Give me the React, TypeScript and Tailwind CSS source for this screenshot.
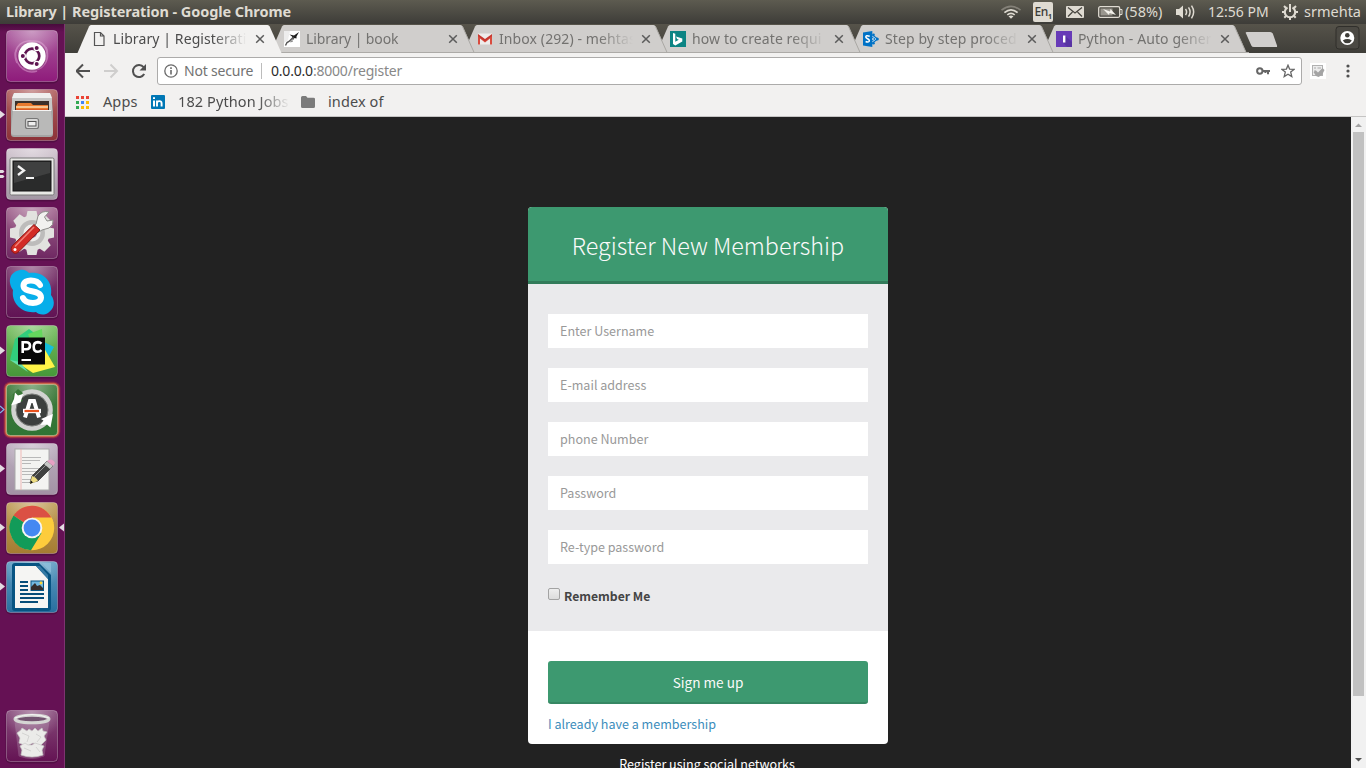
import React from "react";
import type { ReactNode } from "react";

const UI = "font-['Noto_Sans','Open_Sans',sans-serif]";
const SOURCE = "font-['Noto_Sans_CJK_SC',sans-serif]";

/* ---------- Launcher ---------- */

type Pip = "none" | "one" | "two" | "open" | "focused";

function Tile({ id, from, to, pip = "none", glow, children }: { id: string; from: string; to: string; pip?: Pip; glow?: boolean; children: ReactNode }) {
  return (
    <svg width="64" height="59" viewBox="0 0 64 59" className="block shrink-0 overflow-visible">
      <defs>
        <linearGradient id={"t" + id} x1="0" y1="0" x2="0" y2="1">
          <stop offset="0" stopColor={from} />
          <stop offset="1" stopColor={to} />
        </linearGradient>
        <radialGradient id={"g" + id} cx="0.5" cy="0" r="0.6">
          <stop offset="0" stopColor="#fff" stopOpacity="0.4" />
          <stop offset="1" stopColor="#fff" stopOpacity="0" />
        </radialGradient>
      </defs>
      {glow && (
        <>
          <rect x="3.5" y="-2.5" width="57" height="57" rx="7" fill="#e5532d" opacity="0.25" />
          <rect x="4.5" y="-1.5" width="55" height="55" rx="6" fill="#ee6a3a" opacity="0.5" />
          <rect x="5.5" y="-0.5" width="53" height="53" rx="5" fill="#e99a5e" opacity="0.85" />
        </>
      )}
      {!glow && <rect x="5.5" y="1" width="53" height="52.5" rx="5" fill="#000" opacity="0.18" />}
      <rect x="6.5" y="0.5" width="51" height="51" rx="4" fill={`url(#t${id})`} stroke="#fff" strokeOpacity="0.28" />
      <rect x="6.5" y="0.5" width="51" height="51" rx="4" fill={`url(#g${id})`} />
      <g transform="translate(6 0)">{children}</g>
      {(pip === "one" || pip === "focused") && <path d="M0 21.5 L5 25.5 L0 29.5Z" fill="#e3dce2" />}
      {pip === "focused" && <path d="M64 21.5 L59 25.5 L64 29.5Z" fill="#e3dce2" />}
      {pip === "two" && <path d="M0 22h3l1.5 1.5L3 25H0Z M0 27h3l1.5 1.5L3 30H0Z" fill="#e3dce2" />}
      {pip === "open" && <path d="M0 22 L4 25.5 L0 29" fill="none" stroke="#7fb6e8" strokeWidth="1.2" />}
    </svg>
  );
}

function Launcher() {
  return (
    <aside className="flex w-[65px] shrink-0 flex-col border-r border-[#7e3470] bg-[#651154] bg-[linear-gradient(180deg,#480b3c_0,#651154_8px)] pt-[6px]">
      <Tile id="dash" from="#ab5c9e" to="#8f1b7b">
        <g fill="none" stroke="#e9b5df" strokeWidth="1.6" opacity="0.45">
          <path d="M11 33C4 17 19 6 31 13" /><path d="M21 13C38 5 46 24 38 32" /><path d="M40 17C47 36 28 46 17 37" /><path d="M31 41C18 46 5 30 11 18" />
        </g>
        <circle cx="26" cy="26.5" r="14.5" fill="#4d0e40" opacity="0.25" />
        <circle cx="26" cy="26" r="13.7" fill="#fff" />
        <circle cx="26" cy="26" r="7.3" fill="none" stroke="#5e1450" strokeWidth="2.7" />
        <g stroke="#fff" strokeWidth="1.2" fill="#5e1450">
          <circle cx="16.8" cy="26" r="2.6" /><circle cx="30.7" cy="18" r="2.6" /><circle cx="30.7" cy="34" r="2.6" />
        </g>
      </Tile>
      <Tile id="files" from="#b0605f" to="#8c3238" pip="one">
        <path d="M7 5H45L47 22V45Q47 48 44 48H8Q5 48 5 45V22Z" fill="#a5a5a4" />
        <path d="M8 4H44L46 9H6Z" fill="#efefee" />
        <path d="M6 9H46V22H6Z" fill="#c7c7c6" />
        <rect x="9" y="12" width="34" height="10" fill="#3b302b" />
        <path d="M10 17L12 14H25L27 16H42V22H10Z" fill="#e97a2e" /><path d="M10 18H42" stroke="#ffe5ba" strokeWidth="1.4" />
        <path d="M10 20.5H42" stroke="#d95b29" strokeWidth="1" />
        <path d="M7 21H45L47 43Q47 46 44 46H8Q5 46 5 43Z" fill="#b9b9b8" />
        <path d="M7 21.5H45" stroke="#f4f4f3" />
        <rect x="19.5" y="29.5" width="13" height="10" rx="2" fill="#d7d7d6" stroke="#777" strokeWidth="1.2" />
        <rect x="22" y="32.5" width="8" height="4.5" fill="#eee" stroke="#555" />
      </Tile>
      <Tile id="term" from="#d0c3ce" to="#a398a4" pip="two">
        <rect x="4" y="10" width="44" height="37" rx="1.5" fill="#e9e9e6" stroke="#777" />
        <rect x="7" y="13" width="38" height="30" fill="#2a2b2b" stroke="#151515" />
        <path d="M8 14H44V25L8 35Z" fill="#4b4c4b" opacity="0.65" />
        <path d="M12 18L18 22.5L12 27" fill="none" stroke="#f4f4f4" strokeWidth="2.3" />
        <path d="M20 30H28" stroke="#f4f4f4" strokeWidth="2" />
      </Tile>
      <Tile id="set" from="#a2668f" to="#6f2862">
        <g fill="#e2e2df">
          {[0, 45, 90, 135, 180, 225, 270, 315].map((a) => (
            <path key={a} d="M20 11L21.5 4H30.5L32 11Z" transform={`rotate(${a} 26 26)`} />
          ))}
          <circle cx="26" cy="26" r="17.5" />
        </g>
        <circle cx="26" cy="26" r="13" fill="#bdbcbb" /><circle cx="26" cy="26" r="8.5" fill="#eeeeec" /><circle cx="26" cy="26" r="5" fill="#94608b" />
        <path d="M30 17L32 9Q36 3 43 5L38.5 10L41 14L47 13Q48 18 43 21L36 23L31 26L26 21Z" fill="#f1f1ef" stroke="#8d8d8a" strokeWidth="1" />
        <path d="M28 17.5L34 23L13 44.5Q9.5 48 6.5 45Q3.5 42 7 38Z" fill="#d32b25" stroke="#8d1917" />
        <path d="M28 20L9 39.5" stroke="#f18176" strokeWidth="1.6" /><circle cx="9" cy="42.5" r="1.5" fill="#fff" />
      </Tile>
      <Tile id="skype" from="#7c3b6f" to="#611354">
        <path d="M14 4C18 3 21 5 23 7C38 5 47 16 45 29C50 36 48 43 42 47C37 50 32 48 30 46C16 48 5 37 7 24C1 15 4 6 14 4Z" fill="#07aeea" />
        <path d="M34 19C31 13 18 12.5 17.5 19.5C17 27.5 35 23 35 31.5C34.5 39 20 38.5 17 32" fill="none" stroke="#fff" strokeWidth="6" strokeLinecap="round" />
      </Tile>
      <Tile id="pc" from="#76bd5f" to="#469739" pip="one">
        <path d="M9 14L23 4L35 13L22 44L4 35Z" fill="#31ce7d" /><path d="M22 9L36 4L37 18L26 20Z" fill="#65d75d" />
        <path d="M36 16L48 22L42 33L36 36Z" fill="#15bed9" /><path d="M38 23L49 42L27 48L12 38Z" fill="#fff447" /><path d="M4 35L14 37L22 47Z" fill="#65e0a9" />
        <rect x="12" y="12.5" width="27" height="27" fill="#090909" />
        <g fill="none" stroke="#fff" strokeWidth="2.6">
          <path d="M16.7 28V17.2H20.2Q24 17.2 24 20.7T20.2 24.2H17" /><path d="M35.5 18.6Q33.9 17.1 31.9 17.1Q27.7 17.2 27.7 22T31.9 26.8Q33.9 26.8 35.5 25.2" />
        </g>
        <path d="M15.5 35H25" stroke="#fff" strokeWidth="2" />
      </Tile>
      <Tile id="upd" from="#3f7a3b" to="#2f7434" glow pip="open">
        <circle cx="26" cy="26" r="18.5" fill="#3c403e" stroke="#d2d3d1" strokeWidth="4.6" />
        <circle cx="26" cy="26" r="16" fill="none" stroke="#8d8f8c" strokeWidth="0.8" />
        <path d="M3 14L7 10.5L5.5 20.5L17 17L13.5 13.5L17 9L12 5L8 9Z" fill="#3a7838" />
        <path d="M9 8.5L12 11.5L17 10L14.5 18.5L5 21.5L8 15Z" fill="#fff" />
        <path d="M47 30L44.5 43.5L41 40.5L34.5 41L37.5 36.5L35 35Z" fill="#fff" />
        <path d="M19 33.5L24 17H28L33 33.5" fill="none" stroke="#fff" strokeWidth="4" />
        <path d="M17 27H35" stroke="#fff" strokeWidth="4.4" /><path d="M18.5 27H33" stroke="#e95420" strokeWidth="2.2" />
      </Tile>
      <Tile id="edit" from="#bdafc0" to="#a292a4" pip="one">
        <rect x="9" y="6" width="34" height="41" fill="#f3f3f1" stroke="#aaa" />
        <path d="M15 6V47" stroke="#eaa" strokeWidth="0.8" />
        <g stroke="#b8b8b8" strokeWidth="1">
          <path d="M16 14.5H35M16 17.5H34M16 20.5H25M16 25.5H36M16 28.5H37M16 31.5H33M16 36.5H32M16 39.5H28" />
        </g>
        <path d="M24 40L26 33L41 18L47 23L32 38Z" fill="#404140" stroke="#191919" strokeWidth="0.6" />
        <path d="M24 41L26 33Q30 34 32 38Z" fill="#eddc81" /><path d="M24 41L25 37.5L27 39.5Z" fill="#111" />
        <path d="M38 21L41 18L47 23L44 26Z" fill="#c6c7c5" /><path d="M41 18Q46 14 49 20L47 23Z" fill="#e7a1c5" />
        <path d="M28 34L40 22" stroke="#929292" strokeWidth="1" />
      </Tile>
      <Tile id="chrome" from="#c09d59" to="#a57c32" pip="focused">
        <circle cx="26" cy="26" r="22.2" fill="#fdcc3c" />
        <path d="M26 26L7.5 13.5A22.2 22.2 0 0 1 45.4 15.5Z" fill="#db5044" /><path d="M26 15.5H45.2Q47 18 47.7 21L26 26Z" fill="#fdcc3c" />
        <path d="M26 26L7.5 13.5A22.2 22.2 0 0 0 25 48.2L35.5 31Z" fill="#129b59" />
        <circle cx="26" cy="26" r="10.3" fill="#f6f5f3" /><circle cx="26" cy="26" r="8.4" fill="#4488f2" />
      </Tile>
      <Tile id="writer" from="#5e9cc2" to="#286f9f" pip="one">
        <path d="M9 2H33L45 14V47Q45 50 42 50H9Q6 50 6 47V5Q6 2 9 2Z" fill="#075482" /><path d="M9 5H30L42 18V47H9Z" fill="#f5f5f3" />
        <path d="M30 5L42 18V14L34 5Z" fill="#377ba5" /><path d="M36 2H45V12Z" fill="#8fc1dc" opacity="0.75" />
        <path d="M14 21H22M14 25H22M14 29H22M14 33H38M14 37H38M14 41H32" stroke="#064d79" strokeWidth="2" />
        <rect x="25" y="20" width="12.5" height="9.5" fill="#73b9df" stroke="#075482" /><path d="M25 29V26L29 22L31 25L34 24L37 27V29Z" fill="#342e2c" /><circle cx="35" cy="22" r="1.4" fill="#ffd736" />
      </Tile>
      <div className="mt-auto flex h-[58px] shrink-0">
        <Tile id="trash" from="#874b7b" to="#641353">
          <path d="M9 11L13 46Q26 51 38 46L43 11Z" fill="#c9bdc8" opacity="0.25" stroke="#d9cad7" strokeWidth="0.8" />
          <g fill="#ebebe9" stroke="#c9c9c7" strokeWidth="0.7">
            <path d="M11 23L15 20L16 18L21 21L23 19L26 21L29 18L32 21L36 18L37 21L41 22L38 26L40 30L37 33L34 36L27 33L21 36L13 33L14 28Z" />
            <path d="M14 36L19 33L22 35L26 35L29 33L32 34L38 36L36 40L37 45Q26 49 15 45L16 40Z" />
            <path d="M16 23L23 26L21 32M30 24L35 27L31 32M18 38L25 41M30 37L34 42" fill="none" />
          </g>
          <ellipse cx="26" cy="9" rx="17" ry="3.8" fill="#735470" stroke="#d5d5d3" strokeWidth="3" />
          <path d="M9 8Q26 1 43 8" fill="none" stroke="#f5f5f4" />
        </Tile>
      </div>
    </aside>
  );
}

/* ---------- Desktop menu bar ---------- */

function TopPanel() {
  return (
    <header className={`${UI} flex h-6 items-center bg-[linear-gradient(180deg,#5d5b50,#3d3c38)] text-[#dfdbd2]`}>
      <h1 className="mb-[2px] ml-[6px] w-[994px] shrink-0 whitespace-nowrap text-[14.5px] leading-6 font-bold tracking-[-0.08px]">Library | Registeration - Google Chrome</h1>
      <svg width="22" height="24" viewBox="0 0 22 24" className="shrink-0" fill="none" stroke="#dfdbd2" strokeWidth="1.7">
        <path d="M1.5 10.2Q11 2.5 20.5 10.2" opacity="0.35" /><path d="M4.4 12.6Q11 7 17.6 12.6" /><path d="M7.3 14.9Q11 11.8 14.7 14.9" /><path d="M8.5 16.3Q11 14.5 13.5 16.3L11 18.8Z" fill="#dfdbd2" stroke="none" />
      </svg>
      <div className="ml-[11px] flex h-5 w-5 shrink-0 items-center justify-center rounded-[2px] bg-[#dfdbd2] text-[12px] leading-5 font-medium tracking-[-0.4px] text-[#3d3c38]">
        En<span className="mt-[9px] text-[7px] leading-3 font-bold">1</span>
      </div>
      <svg width="18" height="12" viewBox="0 0 18 12" className="ml-[13px] shrink-0"><rect width="18" height="12" rx="1" fill="#dfdbd2" /><path d="M2 1.5L9 7L16 1.5M2 10.5L6.5 6M16 10.5L11.5 6" fill="none" stroke="#46443e" strokeWidth="1.2" /></svg>
      <svg width="25" height="12" viewBox="0 0 25 12" className="ml-[14px] shrink-0"><rect x="0.7" y="0.7" width="21" height="10.6" rx="1.5" fill="none" stroke="#dfdbd2" strokeWidth="1.3" /><rect x="2.5" y="2.5" width="12" height="7" fill="#99968e" /><path d="M22 3.5H24V8.5H22" fill="none" stroke="#dfdbd2" /><path d="M5 3L12 5.5L12.5 3L18 9L11.5 7L11 9Z" fill="#f2f0ea" /></svg>
      <span className="mb-[2px] ml-[2px] w-[40px] shrink-0 whitespace-nowrap text-[14.5px] leading-6">(58%)</span>
      <svg width="22" height="18" viewBox="0 0 22 18" className="ml-[10px] shrink-0" fill="none" stroke="#dfdbd2" strokeWidth="1.5"><path d="M1 6H4L8 2.5V15.5L4 12H1Z" fill="#dfdbd2" stroke="none" /><path d="M10.5 6Q12.7 9 10.5 12M13.5 4.3Q16.7 9 13.5 13.7M16.5 2.7Q20.8 9 16.5 15.3" /></svg>
      <span className="ml-[11px] w-[62px] shrink-0 whitespace-nowrap text-[14px] leading-6">12:56 PM</span>
      <svg width="18" height="18" viewBox="0 0 18 18" className="ml-[11px] shrink-0" fill="none" stroke="#dfdbd2"><path d="M6.5 4.5A5.2 5.2 0 1 0 11.5 4.5" strokeWidth="2.1" /><path d="M9 1V9" strokeWidth="2" /><path d="M3 3L5 5M15 3L13 5M1 9H3.5M14.5 9H17M3.3 14.7L5.2 12.8M14.7 14.7L12.8 12.8M9 14.5V17" strokeWidth="2" /></svg>
      <span className="mb-[2px] ml-[5px] whitespace-nowrap text-[14.5px] leading-6">srmehta</span>
    </header>
  );
}

/* ---------- Browser chrome ---------- */

function Favicon({ kind }: { kind: string }) {
  if (kind === "page") return <svg width="16" height="16" viewBox="0 0 16 16"><path d="M3.5 1.5H9.5L13 5V14.5H3.5Z M9.5 1.5V5H13" fill="none" stroke="#555" strokeWidth="1.2" /></svg>;
  if (kind === "plane")
    return (
      <svg width="16" height="16" viewBox="0 0 16 16"><rect width="16" height="16" fill="#fff" /><path d="M0 0H6L4 9L0 12Z" fill="#ededed" /><path d="M15 1L12.5 5.5L12.5 7.5L10.5 7L9 9L8 5.5L5.5 3.5L10 4.5Z" fill="#1d1d1d" /><path d="M9.5 6L5 10.5L3 11.5L1.5 14.5" stroke="#555" strokeWidth="1.4" fill="none" /><path d="M9.5 7.5L6.5 11L9 10" stroke="#888" fill="none" /></svg>
    );
  if (kind === "gmail")
    return (
      <svg width="16" height="16" viewBox="0 0 16 16"><path d="M1 2.5H15V13.5H1Z" fill="#eeeceb" /><path d="M1 13.5V4L8 9.5L15 4V13.5H13V7.5L8 11.5L3 7.5V13.5Z" fill="#d94b3e" /><path d="M1 3L8 8L15 3V5L8 10.5L1 5Z" fill="#c63830" /></svg>
    );
  if (kind === "bing")
    return <svg width="16" height="16" viewBox="0 0 16 16"><rect width="16" height="16" fill="#0c8484" /><path d="M3 2L5.3 2.8V10.7L8.8 8.8L7.1 8L6 5.4L12.3 7.5V10.5L5.3 14.5L3 13.1Z" fill="#fff" /></svg>;
  if (kind === "sharepoint")
    return (
      <svg width="16" height="16" viewBox="0 0 16 16"><path d="M9.5 4L14.5 8L9.5 12" fill="#fff" stroke="#0072c6" strokeWidth="1.3" /><path d="M9 6L12 8L9 10" fill="none" stroke="#0072c6" /><circle cx="14.2" cy="8" r="1.6" fill="#0072c6" /><circle cx="10.5" cy="3.8" r="1.3" fill="#0072c6" /><circle cx="10.5" cy="12.2" r="1.3" fill="#0072c6" /><path d="M0 1.5L9.3 0V16L0 14.5Z" fill="#0072c6" /><path d="M6.7 5.2Q2.7 3.8 2.8 6Q3 7 5 8Q7 9.3 6 10.5Q5 11.5 2.6 10.5" fill="none" stroke="#fff" strokeWidth="1.5" /></svg>
    );
  return <svg width="16" height="16" viewBox="0 0 16 16"><rect width="16" height="16" fill="#673ab7" /><path d="M9 4.5L16 11V16H11L7 11.5Z" fill="#4f2e96" opacity="0.6" /><rect x="7" y="4.5" width="2.4" height="7" fill="#fff" /></svg>;
}

const tabs = [
  { icon: "page", title: "Library | Registerati" },
  { icon: "plane", title: "Library | book" },
  { icon: "gmail", title: "Inbox (292) - mehtas" },
  { icon: "bing", title: "how to create requi" },
  { icon: "sharepoint", title: "Step by step proced" },
  { icon: "i", title: "Python - Auto gener" },
];

function TabStrip() {
  return (
    <div className="flex h-[29px] bg-[linear-gradient(180deg,#56534a,#3f3e39)] pl-3">
      {tabs.map((t, i) => (
        <div key={t.icon} className="relative flex w-[193px] shrink-0 items-center pl-[14px]" style={{ zIndex: 10 - i }}>
          <svg className="absolute top-0 left-0" width="208" height="29" viewBox="0 0 208 29">
            <path d="M0.5 29L12 2.5Q12.7 1 14 1H190.5Q192 1 192.7 2.5L204.5 29Z" fill={i ? "#d0cecc" : "#f2f1f0"} />
            {i > 0 && <path d="M192.3 2L204.3 29" stroke="#aaa8a4" fill="none" />}
            {i > 0 && <path d="M0.5 28.5H207" stroke="#acaaa7" />}
          </svg>
          <div className="relative flex items-center">
            <Favicon kind={t.icon} />
            <span
              className={`ml-[6px] w-[136px] text-[14px] leading-[28px] whitespace-nowrap [mask-image:linear-gradient(90deg,#000_100px,transparent_134px)] ${i === 1 ? "tracking-[-0.1px]" : "tracking-[0.1px]"} ${i ? "text-[#737270]" : "text-[#4c4c4c]"}`}
            >
              {t.title}
            </span>
            <svg width="10" height="10" viewBox="0 0 10 10" className="ml-[6px]"><path d="M1.2 1.2L8.8 8.8M8.8 1.2L1.2 8.8" stroke="#5b5b5b" strokeWidth="1.5" /></svg>
          </div>
        </div>
      ))}
      <svg width="34" height="29" viewBox="0 0 34 29" className="ml-[10px] shrink-0"><path d="M1 9.5Q0 8 2 8H25Q27 8 27.8 9.5L32 21.5Q32.5 23 31 23H9Q7 23 6.3 21.5Z" fill="#d0cecc" /></svg>
      <svg width="25" height="25" viewBox="0 0 25 25" className="mt-[2px] mr-[6px] ml-auto shrink-0">
        <rect x="1" y="0.5" width="23" height="22.5" rx="3" fill="#4b4943" stroke="#302f2b" /><circle cx="12.3" cy="12" r="7" fill="#fff" /><circle cx="12.3" cy="9.2" r="2.3" fill="#3f3e39" /><path d="M7.8 14.4Q12.3 11.5 16.8 14.4Q15.3 17.3 12.3 17.3T7.8 14.4Z" fill="#3f3e39" />
      </svg>
    </div>
  );
}

function Toolbar() {
  return (
    <div className="flex h-9 items-center bg-[#f2f1f0] pl-[10px] text-[14px]">
      <svg width="64" height="20" viewBox="0 0 64 20" className="mr-[10px] ml-px shrink-0" fill="none">
        <path d="M14 10H1M7 3.5L0.5 10L7 16.5" stroke="#505050" strokeWidth="2" />
        <g transform="translate(28 0)"><path d="M0 10H12.5M6.5 3.5L13 10L6.5 16.5" stroke="#cfcecd" strokeWidth="2" /></g>
      </svg>
      <svg width="16" height="16" viewBox="0 0 16 16" className="-ml-[19px] shrink-0"><path d="M13.2 11A6 6 0 1 1 12.6 4.2" fill="none" stroke="#505050" strokeWidth="2" /><path d="M15 1V7.5H8.5Z" fill="#505050" /></svg>
      <div className="ml-[10px] flex h-7 w-[1145px] shrink-0 items-center rounded-[3px] border border-[#acabaa] bg-white pl-[6px]">
        <svg width="14" height="14" viewBox="0 0 14 14"><circle cx="7" cy="7" r="6.2" fill="none" stroke="#6a6a6a" strokeWidth="1.3" /><path d="M7 6V10.5M7 3.3V4.9" stroke="#6a6a6a" strokeWidth="1.6" /></svg>
        <span className="mb-[2px] ml-[6px] w-[70px] tracking-[-0.2px] whitespace-nowrap text-[#737373]">Not secure</span>
        <span className="ml-[7px] h-4 w-px bg-[#bcbcbc]" />
        <span className="mb-[2px] ml-[9px] tracking-[-0.2px] whitespace-nowrap text-[#888]"><span className="text-[#2c2c2c]">0.0.0.0</span>:8000/register</span>
        <svg width="14" height="8" viewBox="0 0 14 8" className="mr-[11px] ml-auto"><circle cx="3.8" cy="4" r="2.7" fill="none" stroke="#666" strokeWidth="2" /><path d="M6 4H14M12 4V7.3M9.4 4V6" stroke="#666" strokeWidth="2" /></svg>
        <svg width="14" height="14" viewBox="0 0 14 14" className="mr-[6px]"><path d="M7 1.2L8.6 5.1L13 5.4L9.7 8.1L10.8 12.6L7 10.2L3.2 12.6L4.3 8.1L1 5.4L5.4 5.1Z" fill="none" stroke="#666" strokeWidth="1.3" /></svg>
      </div>
      <svg width="16" height="16" viewBox="0 0 16 16" className="ml-2 shrink-0"><rect width="16" height="16" fill="#fff" /><rect x="2.5" y="2.5" width="10" height="10" fill="#ececec" stroke="#b1b1b1" /><path d="M4 5H6M7.5 5H11M4 8H6" stroke="#aaa" /><path d="M3.5 9L6 7.5L8 9.5L12.5 5L14.5 7L12 12L8.5 14L6 13Z" fill="#a4a4a4" /></svg>
      <svg width="4" height="14" viewBox="0 0 4 14" className="ml-[20px] shrink-0" fill="#505050"><circle cx="2" cy="2" r="1.6" /><circle cx="2" cy="7" r="1.6" /><circle cx="2" cy="12" r="1.6" /></svg>
    </div>
  );
}

function Bookmarks() {
  return (
    <div className="flex h-7 items-center border-b border-[#c5c4c3] bg-[#f2f1f0] pb-px pl-[11px] text-[14.5px] tracking-[0.1px] text-[#4c4c4c]">
      <svg width="13" height="13" viewBox="0 0 13 13" className="shrink-0">
        {["#ea4335", "#ea4335", "#ea4335", "#34a853", "#4285f4", "#fbbc05", "#34a853", "#fbbc05", "#fbbc05"].map((c, i) => (
          <rect key={i} x={(i % 3) * 5} y={Math.floor(i / 3) * 5} width="3" height="3" fill={c} />
        ))}
      </svg>
      <span className="ml-[14px] w-[48px] whitespace-nowrap">Apps</span>
      <svg width="14" height="14" viewBox="0 0 14 14" className="shrink-0"><rect width="14" height="14" rx="1" fill="#0077b5" /><path d="M3 5.4V11.6M3 2.2V4" stroke="#fff" strokeWidth="2" /><path d="M6 11.6V5.4M6 8Q6.2 6.2 8.2 6.1Q10.6 6 10.6 8.5V11.6" fill="none" stroke="#fff" strokeWidth="1.9" /></svg>
      <span className="ml-[13px] w-[110px] whitespace-nowrap [mask-image:linear-gradient(90deg,#000_80px,transparent_112px)]">182 Python Jobs</span>
      <svg width="14" height="12" viewBox="0 0 14 12" className="ml-[13px] shrink-0"><path d="M0 1.5Q0 0 1.5 0H5L6.5 1.7H12.5Q14 1.7 14 3V10.5Q14 12 12.5 12H1.5Q0 12 0 10.5Z" fill="#7b7b7b" /></svg>
      <span className="ml-[13px] whitespace-nowrap">index of</span>
    </div>
  );
}

/* ---------- Page ---------- */

function RegisterCard() {
  return (
    <main className={`${SOURCE} flex flex-1 flex-col items-center overflow-hidden bg-[#222] pt-[90px]`}>
      <div className="w-[360px] shrink-0 overflow-hidden rounded-[4px] bg-white">
        <h2 className="h-[77px] border-b-[3px] border-[#327b5a] bg-[#3d9970] text-center text-[23.3px] leading-[76px] font-light whitespace-nowrap text-[#fafafa]">Register New Membership</h2>
        <div className="flex h-[347px] flex-col gap-5 bg-[#eaeaec] px-5 pt-[30px]">
          {["Enter Username", "E-mail address", "phone Number", "Password", "Re-type password"].map((p) => (
            <input key={p} placeholder={p} className="h-[34px] w-full shrink-0 bg-white px-3 pb-[2px] text-[12.55px] text-[#555] outline-none placeholder:text-[#999] placeholder:opacity-100" />
          ))}
          <label className="flex items-start pt-1 text-[12.2px] leading-4 font-bold text-[#444]">
            <span className="mr-1 h-3 w-3 rounded-[2px] border border-[#a3a3a3] bg-[linear-gradient(180deg,#eee,#dcdcdc)]" />
            <span>Remember Me</span>
          </label>
        </div>
        <div className="flex h-[113px] flex-col px-5 pt-[30px]">
          <button className="h-[43px] w-full shrink-0 rounded-[3px] border-b-2 border-[#368763] bg-[#3d9970] pt-[2px] text-[13.6px] leading-[39px] text-[#f9f9f9]">Sign me up</button>
          <a className="mt-[10px] text-[12.55px] leading-[20px] text-[#3c8dbc]">I already have a membership</a>
        </div>
      </div>
      <p className="mt-[10px] h-5 shrink-0 pr-[2px] text-[12.55px] leading-5 text-white">Register using social networks</p>
    </main>
  );
}

function Scrollbar() {
  return (
    <div className="flex w-[15px] shrink-0 flex-col items-center bg-[#f1f1f1]">
      <svg width="15" height="15" viewBox="0 0 15 15"><path d="M4 10L7.5 6.5L11 10Z" fill="#a3a3a3" /></svg>
      <div className="h-[564px] w-[11px] bg-[#c1c1c1]" />
      <svg width="15" height="15" viewBox="0 0 15 15" className="mt-auto"><path d="M4 5L7.5 8.5L11 5Z" fill="#505050" /></svg>
    </div>
  );
}

export default function App() {
  return (
    <div className="flex h-[768px] w-[1366px] flex-col overflow-hidden bg-[#222]">
      <TopPanel />
      <div className="flex h-[744px] min-h-0">
        <Launcher />
        <div className="flex w-[1301px] flex-col">
          <div className={UI}>
            <TabStrip />
            <Toolbar />
            <Bookmarks />
          </div>
          <div className="flex min-h-0 flex-1">
            <RegisterCard />
            <Scrollbar />
          </div>
        </div>
      </div>
    </div>
  );
}
